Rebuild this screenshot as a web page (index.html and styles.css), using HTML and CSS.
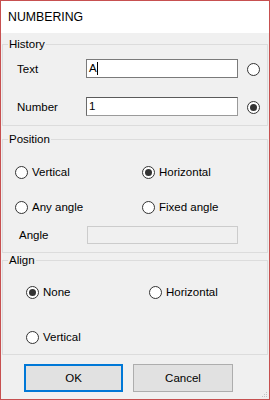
FILE: index.html
```html
<!DOCTYPE html>
<html>
<head>
<meta charset="utf-8">
<link rel="stylesheet" href="styles.css">
</head>
<body>
<div class="window">
  <div class="titlebar">NUMBERING</div>
  <fieldset class="group history">
    <legend>History</legend>
    <div class="group-body">
      <div class="field-row">
        <span class="lbl">Text</span>
        <div class="input">A<span class="caret"></span></div>
        <span class="radio"></span>
      </div>
      <div class="field-row second">
        <span class="lbl">Number</span>
        <div class="input dark">1</div>
        <span class="radio checked"></span>
      </div>
    </div>
  </fieldset>
  <fieldset class="group position">
    <legend>Position</legend>
    <div class="group-body">
      <div class="opt-grid">
        <label class="opt"><span class="radio"></span><span>Vertical</span></label>
        <label class="opt"><span class="radio checked"></span><span>Horizontal</span></label>
        <label class="opt"><span class="radio"></span><span>Any angle</span></label>
        <label class="opt"><span class="radio"></span><span>Fixed angle</span></label>
      </div>
      <div class="angle-row">
        <span class="lbl">Angle</span>
        <div class="input disabled"></div>
      </div>
    </div>
  </fieldset>
  <fieldset class="group align">
    <legend>Align</legend>
    <div class="group-body">
      <div class="opt-grid">
        <label class="opt"><span class="radio checked"></span><span>None</span></label>
        <label class="opt"><span class="radio"></span><span>Horizontal</span></label>
        <label class="opt"><span class="radio"></span><span>Vertical</span></label>
      </div>
    </div>
  </fieldset>
  <div class="buttons">
    <div class="btn default">OK</div>
    <div class="btn">Cancel</div>
  </div>
  <svg class="grip" width="6" height="6" viewBox="0 0 6 6">
    <rect x="4" y="0" width="1" height="1" fill="#c4c4c4"/>
    <rect x="2" y="2" width="1" height="1" fill="#c4c4c4"/>
    <rect x="4" y="2" width="1" height="1" fill="#c4c4c4"/>
    <rect x="0" y="4" width="1" height="1" fill="#c4c4c4"/>
    <rect x="2" y="4" width="1" height="1" fill="#c4c4c4"/>
    <rect x="4" y="4" width="1" height="1" fill="#c4c4c4"/>
  </svg>
</div>
</body>
</html>
```

FILE: styles.css
```css
* { box-sizing: border-box; }
html, body { margin: 0; padding: 0; }
body { width: 270px; height: 400px; overflow: hidden; background: #f0f0f0; }

.window {
  position: relative;
  width: 270px;
  height: 400px;
  border: 1px solid #c75050;
  background: #f0f0f0;
  display: flex;
  flex-direction: column;
  font-family: "Liberation Sans", Arial, sans-serif;
  font-size: 11.5px;
  color: #000;
}

.titlebar {
  height: 32px;
  flex: none;
  background: #fff;
  padding-left: 7px;
  font-size: 12.3px;
  line-height: 32px;
  color: #000;
}

.group {
  margin: 0 1px;
  padding: 0;
  border: 1px solid #dcdcdc;
  min-width: 0;
  flex: none;
}
.group legend {
  margin-left: 5px;
  padding: 0 1px;
  line-height: 14px;
  font-size: 11.5px;
  color: #000;
}

.history { margin-top: 4px; }
.history .group-body { padding: 8px 0 9px 14px; }
.position { margin-top: 6px; }
.position .group-body { padding: 18px 0 8px 12px; }
.align { margin-top: 0; }
.align .group-body { padding: 17px 0 9px 23px; }

.field-row {
  display: grid;
  grid-template-columns: 60px 152px 13px;
  column-gap: 9px;
  align-items: center;
  height: 19px;
}
.field-row.second { margin-top: 19px; }
.field-row .radio { margin-top: 2px; }

.lbl { white-space: nowrap; }

.input {
  height: 19px;
  border: 1px solid #7a7a7a;
  background: #fff;
  padding-left: 2px;
  line-height: 17px;
  display: flex;
  align-items: center;
}
.input.dark { border-color: #5a5a5a #9a9a9a #9a9a9a #6a6a6a; }
.caret {
  display: inline-block;
  width: 1px;
  height: 13px;
  background: #000;
}
.input.disabled {
  height: 18px;
  background: #f0f0f0;
  border: 1px solid #cccccc;
}

.radio {
  width: 13px;
  height: 13px;
  border-radius: 50%;
  border: 1px solid #333;
  background: #fff;
  display: inline-flex;
  align-items: center;
  justify-content: center;
  flex: none;
}
.radio.checked::after {
  content: "";
  width: 7px;
  height: 7px;
  border-radius: 50%;
  background: #333;
}

.position .opt-grid {
  display: grid;
  grid-template-columns: 127px 1fr;
  grid-auto-rows: 16px;
  row-gap: 19px;
}
.align .opt-grid {
  display: grid;
  grid-template-columns: 123px 1fr;
  grid-auto-rows: 16px;
  row-gap: 29px;
}
.opt {
  display: flex;
  align-items: center;
  gap: 4px;
  white-space: nowrap;
}

.angle-row {
  display: grid;
  grid-template-columns: 72px 151px;
  align-items: center;
  margin-top: 11px;
}
.angle-row .lbl { padding-left: 4px; }

.buttons {
  display: flex;
  gap: 10px;
  padding-left: 23px;
  margin-top: 9px;
}
.btn {
  width: 99px;
  height: 28px;
  background: #e1e1e1;
  border: 1px solid #adadad;
  display: flex;
  align-items: center;
  justify-content: center;
  font-size: 11.5px;
}
.btn + .btn { width: 100px; }
.btn.default { border: 2px solid #0078d7; }

.grip {
  position: absolute;
  right: 1px;
  bottom: 1px;
}
```
